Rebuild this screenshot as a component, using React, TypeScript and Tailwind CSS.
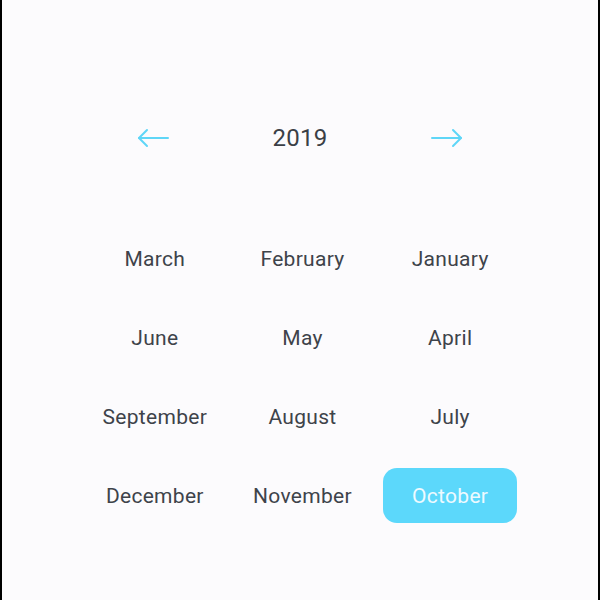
import React from "react";

const months = [
  "March", "February", "January",
  "June", "May", "April",
  "September", "August", "July",
  "December", "November", "October",
];

function Arrow({ dir }: { dir: "left" | "right" }) {
  return (
    <svg width="32" height="20" viewBox="0 0 32 20" fill="none" stroke="#5fd6f7" strokeWidth="2" strokeLinecap="round" strokeLinejoin="round">
      {dir === "left" ? (
        <>
          <line x1="2" y1="10" x2="31" y2="10" />
          <polyline points="10,2 2,10 10,18" />
        </>
      ) : (
        <>
          <line x1="1" y1="10" x2="30" y2="10" />
          <polyline points="22,2 30,10 22,18" />
        </>
      )}
    </svg>
  );
}

export default function App() {
  return (
    <div
      className="h-[600px] w-[600px] bg-[#fcfbfd] border-x-2 border-black flex flex-col"
      style={{ fontFamily: "Roboto, 'Noto Sans', sans-serif" }}
    >
      <div className="mt-[118px] h-[40px] w-[326px] mx-auto flex items-center justify-between">
        <Arrow dir="left" />
        <span className="text-[24px] text-[#3a3f46] leading-none tracking-[0.2px]">2019</span>
        <Arrow dir="right" />
      </div>
      <div className="mt-[62px] ml-[79px] w-[443px] grid grid-cols-3">
        {months.map((m) => (
          <div key={m} className="h-[79px] flex items-center justify-center">
            {m === "October" ? (
              <div className="w-[134px] h-[55px] mb-[2px] rounded-[14px] bg-[#5cd8fb] flex items-center justify-center text-[21px] tracking-[0.3px] text-[#eefaff] pt-[3px]">
                {m}
              </div>
            ) : (
              <span className="text-[21px] tracking-[0.3px] text-[#3e434a]">{m}</span>
            )}
          </div>
        ))}
      </div>
    </div>
  );
}
